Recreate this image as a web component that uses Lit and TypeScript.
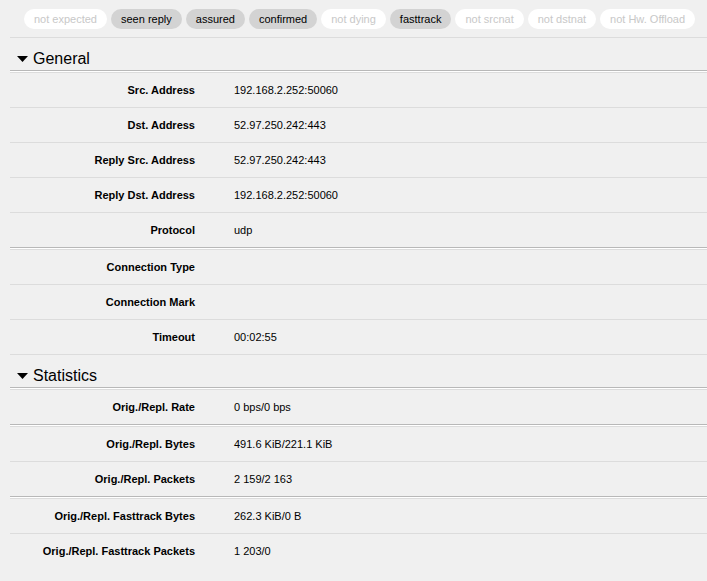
import { LitElement, html, css } from "lit";
import { customElement, property, state } from "lit/decorators.js";
import { classMap } from "lit/directives/class-map.js";

interface Flag {
  text: string;
  on: boolean;
}

type Field = [label: string, value: string];

interface Section {
  title: string;
  groups: Field[][];
}

const FLAGS: Flag[] = [
  { text: "not expected", on: false },
  { text: "seen reply", on: true },
  { text: "assured", on: true },
  { text: "confirmed", on: true },
  { text: "not dying", on: false },
  { text: "fasttrack", on: true },
  { text: "not srcnat", on: false },
  { text: "not dstnat", on: false },
  { text: "not Hw. Offload", on: false },
];

const SECTIONS: Section[] = [
  {
    title: "General",
    groups: [
      [
        ["Src. Address", "192.168.2.252:50060"],
        ["Dst. Address", "52.97.250.242:443"],
        ["Reply Src. Address", "52.97.250.242:443"],
        ["Reply Dst. Address", "192.168.2.252:50060"],
        ["Protocol", "udp"],
      ],
      [
        ["Connection Type", ""],
        ["Connection Mark", ""],
        ["Timeout", "00:02:55"],
      ],
    ],
  },
  {
    title: "Statistics",
    groups: [
      [["Orig./Repl. Rate", "0 bps/0 bps"]],
      [
        ["Orig./Repl. Bytes", "491.6 KiB/221.1 KiB"],
        ["Orig./Repl. Packets", "2 159/2 163"],
      ],
      [
        ["Orig./Repl. Fasttrack Bytes", "262.3 KiB/0 B"],
        ["Orig./Repl. Fasttrack Packets", "1 203/0"],
      ],
    ],
  },
];

@customElement("detail-section")
export class DetailSection extends LitElement {
  @property({ attribute: false }) section!: Section;
  @state() private open = true;

  static styles = css`
    :host {
      display: block;
    }
    .heading {
      margin: 0;
      border-top: 1px solid #dcdcdc;
      font-size: 16px;
      font-weight: 400;
    }
    .toggle {
      display: flex;
      align-items: center;
      gap: 5px;
      width: 100%;
      height: 32px;
      padding: 10px 7px 0;
      border: 0;
      background: none;
      color: #000;
      font: inherit;
      line-height: 22px;
      text-align: left;
    }
    .arrow {
      width: 11px;
      height: 6px;
      fill: #000;
    }
    .closed .arrow {
      transform: rotate(-90deg);
    }
    /* A dark line with a white one under it opens each group. */
    .group {
      margin: 0;
      border-top: 1px solid #b8b8b8;
      box-shadow: inset 0 1px #fff;
      padding-top: 1px;
    }
    .row {
      display: grid;
      grid-template-columns: 185px 1fr;
      column-gap: 39px;
      border-top: 1px solid #dcdcdc;
      line-height: 34px;
    }
    .label {
      font-weight: 700;
      text-align: right;
      white-space: nowrap;
    }
    .value {
      margin: 0;
    }
  `;

  private toggle() {
    this.open = !this.open;
  }

  render() {
    const { title, groups } = this.section;
    return html`
      <h2 class=${classMap({ heading: true, closed: !this.open })}>
        <button class="toggle" type="button" aria-expanded=${this.open} @click=${this.toggle}>
          <svg class="arrow" viewBox="0 0 11 6" aria-hidden="true">
            <path d="M0 0H11L5.5 6Z" />
          </svg>
          <span>${title}</span>
        </button>
      </h2>
      ${this.open
        ? groups.map(
            (fields) => html`<dl class="group">
              ${fields.map(
                ([label, value]) => html`<div class="row">
                  <dt class="label">${label}</dt>
                  <dd class="value">${value}</dd>
                </div>`
              )}
            </dl>`
          )
        : null}
    `;
  }
}

@customElement("app-root")
export class AppRoot extends LitElement {
  static styles = css`
    :host {
      display: block;
      box-sizing: border-box;
      min-height: 100vh;
      padding-left: 10px;
      background: #f0f0f0;
      color: #000;
      font: 11px "Liberation Sans", Arial, sans-serif;
    }
    .flags {
      display: flex;
      flex-wrap: wrap;
      gap: 4px;
      margin: 0;
      padding: 9px 8px 8px 14px;
      list-style: none;
    }
    .flag {
      padding: 0 10px;
      border-radius: 10px;
      background: #fff;
      color: #c8c8c8;
      line-height: 20px;
      white-space: nowrap;
    }
    .on {
      background: #d3d3d3;
      color: #000;
    }
  `;

  render() {
    return html`
      <ul class="flags">
        ${FLAGS.map(
          (flag) => html`<li class=${classMap({ flag: true, on: flag.on })}>${flag.text}</li>`
        )}
      </ul>
      ${SECTIONS.map((section) => html`<detail-section .section=${section}></detail-section>`)}
    `;
  }
}
